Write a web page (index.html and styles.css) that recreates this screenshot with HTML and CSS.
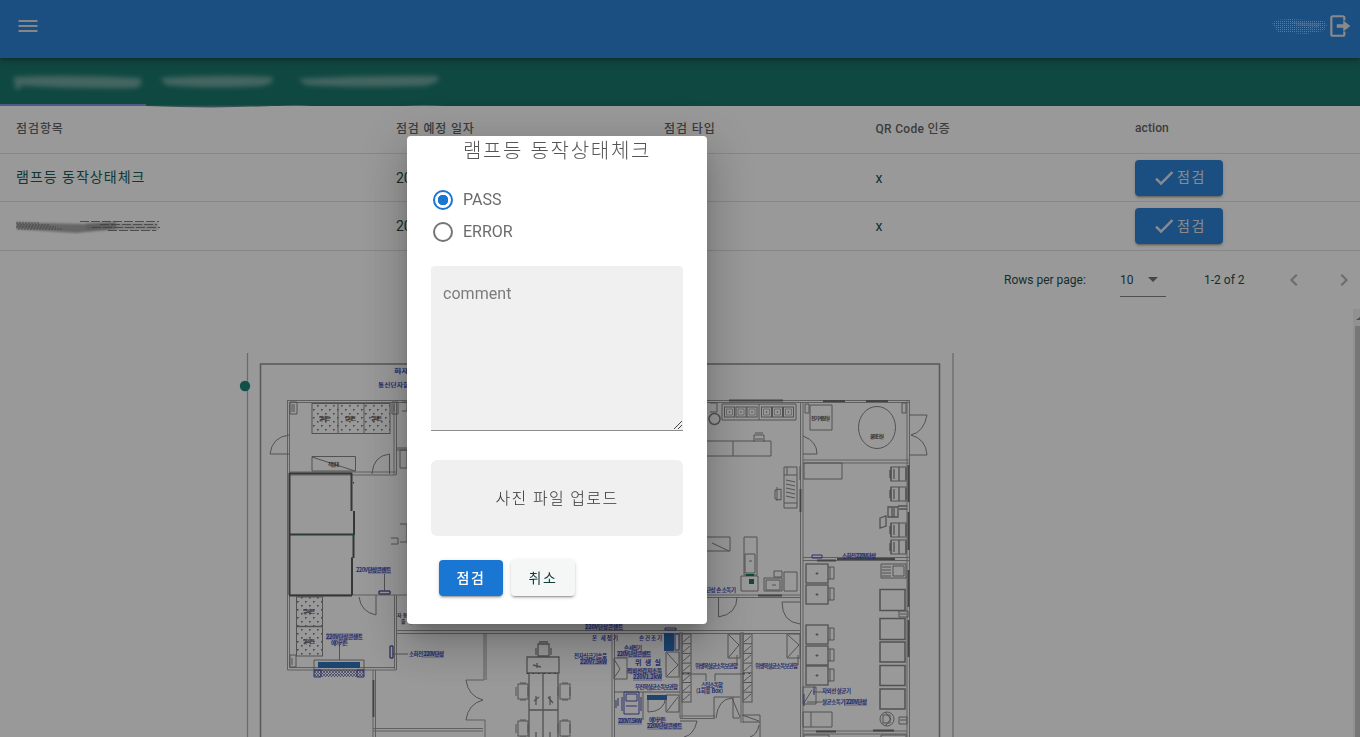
FILE: index.html
```html
<!DOCTYPE html>
<html lang="ko">
<head>
<meta charset="utf-8">
<title>점검</title>
<link rel="stylesheet" href="styles.css">
</head>
<body>
<div class="app">
  <header class="appbar">
    <svg class="menu" viewBox="0 0 24 24"><path d="M2.500 6h19v2h-19V6m0 5h19v2h-19v-2m0 5h19v2h-19v-2z"/></svg>
    <div class="user">
      <svg class="smudge-user" viewBox="0 0 56 18"><defs><pattern id="dots" width="2" height="2" patternUnits="userSpaceOnUse"><path d="M0 0h1v1H0z" fill="#b9bdcc"/></pattern></defs><path d="M0 7L4 3 18 2 52 4 55 8 52 14 33 17 6 15z" fill="url(#dots)"/><path d="M18 5L50 6 46 10 28 9z" fill="#a9b7d0" opacity=".4"/><path d="M28 14h3M36 12h4M42 10h5M33 8h3" stroke="#3f97f0"/></svg>
      <svg class="logout" viewBox="0 0 22 24"><path d="M15 7V4.500Q15 3 13.500 3H4.500Q3 3 3 4.500V19.500Q3 21 4.500 21H13.500Q15 21 15 19.500V17" fill="none" stroke="#e4e4e4" stroke-width="2"/><path d="M8 10.300h6V7l6.500 5-6.500 5v-3.300H8z" fill="#e4e4e4"/></svg>
    </div>
  </header>
  <nav class="tabs">
    <svg viewBox="0 0 480 50"><defs><filter id="soft" x="-10%" y="-60%" width="120%" height="220%"><feGaussianBlur stdDeviation="2.500"/></filter></defs>
      <g filter="url(#soft)" fill="#b5cfcc" opacity=".55"><path d="M13 19Q70 16 140 20 145 26 136 30 70 31 16 27z"/><path d="M160 20Q220 16 272 19 276 25 262 28 205 31 166 27z"/><path d="M298 21Q370 17 438 18 442 24 424 28 350 30 306 27z"/><path d="M15 19h8l-3 12h-5z"/></g>
      <path d="M0 46H146V48H0z" fill="#7f8ad4"/><path d="M146 47.500H280Q220 51 146 48z" fill="#4a7d78"/><path d="M276 48Q295 46.500 312 48zM404 48Q425 46.500 444 48z" fill="#c5dcd8" opacity=".6"/></svg>
  </nav>
  <section class="table">
    <div class="row head"><span>점검항목</span><span>점검 예정 일자</span><span>점검 타입</span><span>QR Code 인증</span><span>action</span></div>
    <div class="row"><span class="item">램프등 동작상태체크</span><span>20</span><span></span><span>x</span><span><button class="btn check"><svg viewBox="0 0 24 24"><path d="M21 7L9 19l-5.500-5.500 1.410-1.410L9 16.170 19.590 5.590z"/></svg>점검</button></span></div>
    <div class="row last"><span><svg class="scratch" viewBox="0 0 146 16"><defs><filter id="s2"><feGaussianBlur stdDeviation="1"/></filter></defs><path d="M0 4L20 5 70 6 100 4V11L60 15 30 13 0 11z" fill="#555" opacity=".55" filter="url(#s2)"/><path d="M0 5H24M1 7H34M0 9H40M2 11H46" stroke="#444" stroke-dasharray="2 1" opacity=".6"/><path d="M64 3.500H143M84 6.500H141M76 9.500H144M92 12.500H140" stroke="#444" stroke-width="1" stroke-dasharray="9 2" opacity=".75"/><path d="M70 5H142V12H70z" fill="#777" opacity=".35" filter="url(#s2)"/></svg></span><span>20</span><span></span><span>x</span><span><button class="btn check"><svg viewBox="0 0 24 24"><path d="M21 7L9 19l-5.500-5.500 1.410-1.410L9 16.170 19.590 5.590z"/></svg>점검</button></span></div>
    <footer class="pager">
      <span class="rpp">Rows per page:</span>
      <span class="select">10<i></i></span>
      <span class="range">1-2 of 2</span>
      <svg class="prev" viewBox="0 0 24 24"><path d="M15.400 16.600L10.800 12l4.600-4.600L14 6l-6 6 6 6z"/></svg>
      <svg class="next" viewBox="0 0 24 24"><path d="M8.600 16.600L13.200 12 8.600 7.400 10 6l6 6-6 6z"/></svg>
    </footer>
  </section>
  <section class="plan">
    <svg class="drawing" viewBox="0 309 1353 428">
      <defs>
        <pattern id="tile" width="8" height="8" patternUnits="userSpaceOnUse"><path d="M1 1h1.600v1.600H1zM5 5h1.600v1.600H5z" fill="#666"/></pattern>
        <pattern id="mesh" width="3" height="3" patternUnits="userSpaceOnUse"><path d="M0 0L3 3M3 0L0 3" stroke="#5058a0" stroke-width=".7"/></pattern>
        <g id="chairV"><rect x="2" y="0" width="10" height="15"/><path d="M0 3V12M4 -1H10M4 16H10M12 3V12"/></g>
        <g id="seat"><rect width="10" height="10"/><path d="M2 2H8V8H2zM5 4V6M4 5H6" opacity=".6"/></g>
        <g id="desk"><rect width="22" height="19" stroke-width="1.300"/><path d="M22 3H28V15H22M24 3V15M11 8V11M9.500 9.500H12.500"/></g>
        <g id="locker"><rect width="9" height="68"/><path d="M0 9.700H9M0 19.400H9M0 29.100H9M0 38.800H9M0 48.500H9M0 58.200H9M1 8L8 2M1 18L8 12M1 27L8 21M1 37L8 31M1 47L8 41M1 57L8 51M1 66L8 60"/></g>
        <g id="stool"><rect width="15" height="14"/><path d="M0 0V14M3 2V12M8 0V14M-1 3V11M15 1V13" stroke-width="1.300"/></g>
      </defs>
      <g class="thin">
        <path d="M247.500 353V737M953 353V737" class="pale"/>
        <path d="M260.500 737V364H939.500V737" class="frame"/>
      </g>
      <g class="wall">
        <path d="M287 400.500H909M289 402.500H909M287.500 400V670H396M289.500 402V667.500H394M394 402V475M396.500 402V475M289 472H396M289 475H396M289 595H407M394.500 595V669M396.500 595V670"/>
        <path d="M396 630.500H801M396 633.500H801M800.500 402V737M803 402V737M907 400V737M909.500 400V737M803 460H909M803 463H909M803 557.500H909M803 560.500H909M700 595H800M700 597.500H800"/>
        <path d="M373 670V737M375.500 670V737M373 728.500H483M373 731H483M484 633V680H466M486 633V680M466 720H485V737M612 633V737M614.500 633V737M680 632V718M682 632V718M741 632V723M743 632V723M680 718.500H715M680 716H715M803 731H907M803 734H907"/>
      </g>
      <g class="fine">
        <rect x="312" y="403.500" width="78" height="30" fill="url(#tile)"/><path d="M338 403V433M364 403V433"/>
        <rect x="296.500" y="597" width="26" height="59" fill="url(#tile)"/><path d="M296 626.500H322" stroke-width="1.500"/>
        <path d="M290 402h7v12h-7zM292 404v8M294 404v8M392 402h6v12h-6zM394 404v8M290 655h6v12h-6zM292 658v7M402 402h5v9h-5M396 448H407M396 450H407M400 450h7v18h-7zM400 524h7v18h-7M391 538h7v6h-7"/>
        <path d="M289 454H270Q272 437 289 435M312 456.500H355.500V471H312zM312 457L355 471M389.500 474V454Q373 456 372 474M376 595V615Q361 612 359 597M379 591h11v3h-11zM384.500 574V591M390 646h3v12h-3zM393 654H408M339.500 645V660"/>
        <path d="M314 660H364V670H314z"/>
        <path d="M466 680Q468 696 483 700 468 704 466 720"/>
        <path d="M538 644h11v12h-11zM536 648v7M551 648v7M539 642h9M527 657h32v16h-32zM529 673V737M543 673V737M558 673V737M529 710H558M533 665L541 667M537 663V668M536 696v9M550 696v9M534 701l5-4M548 697l5 6M536 732v5M550 732v5" stroke-width="1.300"/>
        <use href="#chairV" x="516" y="684"/><use href="#chairV" x="558" y="684"/><use href="#chairV" x="516" y="721"/><use href="#chairV" x="558" y="721"/>
        <path d="M666 652h13v25h-13zM667 653L678 665 667 676M614 658h13v21h-13zM614 659L620 669 614 678M666 695h13v17h-13zM667 711L678 697M614 692H680M648 700V712Q664 712 666 697M643 692V720M728 634h12v24h-12zM729 635L739 645 729 657M787 634h13v24h-13zM788 635L799 645 788 657M798 655V665M737 655V665M682 674H706V681M715 681V674H745M714 718V697H740M733 697V718H740M716 718Q718 699 732 698L740 717M743 715H760V737M743 722H760M742 715L759 721M680 721H697Q694 735 684 737M759 725Q757 735 750 737"/>
        <use href="#locker" x="682" y="634"/><use href="#locker" x="743" y="634"/>
        <path d="M722 404h74v16h-74zM759 404v16M710 403h7v9h-7M707 441h64v15h-64M733 441v15M754 442V435h10v7M755 439h8M755 433h8"/>
        <circle cx="714.500" cy="419" r="5.500" stroke-width="1.500"/>
        <use href="#seat" x="724.500" y="407"/><use href="#seat" x="736" y="407"/><use href="#seat" x="747" y="407"/><use href="#seat" x="761.500" y="407"/><use href="#seat" x="772.500" y="407"/><use href="#seat" x="783.500" y="407"/>
        <path d="M803 436Q817 441 817 454H803M810 405h22v25h-22zM805 404h4v9h-4zM902 403h4v10h-4zM909 415H927Q924 432 911 435 926 439 927 455H909M804 463h38v16h-38zM784 467h13v41h-13zM784 475h13M784 503h13M787 467v8M786 480l9 2M786 484l9 2M786 488l9 2M786 492l9 2M786 496l9 2M775 490l6-1v11l-6-1zM777 487v14"/>
        <ellipse cx="877" cy="427.500" rx="18.500" ry="21"/>
        <use href="#stool" x="891" y="467"/><use href="#stool" x="891" y="487"/><use href="#stool" x="891" y="523"/><use href="#stool" x="891" y="540"/>
        <path d="M888 507h10v10h-10zM892 508v9M894 508v9M880 518l6-2v10l-6 2zM898 506h9M899 509h8" stroke-width="1.300"/>
        <path d="M700 537h30v14h-30M712 543L729 551M744 537h13v38h-13zM745 554h10v19h-10zM749 561h3M741 576h17v15h-17zM764 578h18v13h-18zM766 580h14v10h-14zM772 585h4M784 572h13v19h-13zM774 571h8v6h-8zM718.500 597V617Q737 614 737 597M800 602H782Q782 622 800 624M800 466V480"/>
        <use href="#desk" x="806" y="564"/><use href="#desk" x="806" y="585"/><use href="#desk" x="806" y="625"/><use href="#desk" x="806" y="646"/><use href="#desk" x="806" y="666"/>
        <path d="M880 589.500h25v21h-25zM880 618.500h25v21h-25zM880 642h25v20h-25zM880 665.500h25v20h-25zM880 689h25v20h-25z" stroke-width="1.500"/>
        <path d="M881 564h25v14h-25zM893 566h11v10h-11zM882 567h9M882 570h9M882 573h9M882 576h9M899 611h9v6h-9zM900 614h6M899 717h8v7h-8zM900 720h6M803 712h29v15h-29zM811 712v15M803 687h13v17h-13zM804 703L812 690M813 692H822M807 702H822M804 737V735H829V737M881 737V735H906V737"/>
        <circle cx="887" cy="719" r="7"/><path d="M883 715h7v8h-7zM885 712L891 719 885 726"/>
      </g>
      <g class="heavy"><path d="M289 473.500H352M289.500 473V595M289 534.500H354M289 595.500H352M351.500 473V511M354 511V535M353.500 535V558M352 558V595"/></g>
      <g class="heavy window"><path d="M373.500 680V717M800.500 489V512M908.500 465V502M908.500 512V550M908.500 570V607M908.500 620V657M729 400.500H783M823 401H845M866 401H888M758 595.500H782M817 560.500H836M837 559H895M816 731.500H836M873 730.500H894"/></g>
      <path d="M291 473.500H350M291 534.500H353M353.500 482V486M352 557V560M352 584V587M527 673.500H559M682 673.500H691M743 673.500H752" stroke="#006b5b" stroke-width="1.200" stroke-dasharray="1.500 4" fill="none"/>
      <path d="M749 579h5v5h-5zM746 574h8v2h-8z" fill="#006b5b"/>
      <path d="M318 662H360V668H318zM664 633H674V651H664zM647 695H667V700H647z" fill="#1964b4"/>
      <path d="M314 670H364V677H314z" fill="url(#mesh)"/>
      <g fill="none" stroke="#3940a8" stroke-width="1"><path d="M314 670h7v7h-7zM357 670h7v7h-7zM379 591h11v3h-11zM390 646h3v12h-3zM812 555h10v3h-10zM624 692h15v22h-15zM626 694h11v7h-11zM622 697v14M641 697v14M626 706h11M616 700v8M618 698v8M675 634h4v16h-4zM665 628h11v2h-11zM804 694v12M814 687v8"/></g>
      <path class="wash" d="M368 567h23v7h-23zM326 633h36v7h-36zM422 651h22v7h-22zM580 658h27v7h-27zM585 624h38v7h-38zM617 651h34v7h-34zM633 674h29v7h-29zM627 668h35v6h-35zM618 718h24v7h-24zM647 723h35v7h-35zM855 553h21v7h-21zM844 699h23v7h-23z"/>
      <g class="note">
        <text x="394" y="373" textLength="38" lengthAdjust="spacingAndGlyphs">화재감지기</text><text x="378" y="387" textLength="42" lengthAdjust="spacingAndGlyphs">통신단자함용 -</text>
        <text x="356" y="572" textLength="35">220V단상콘센트</text><text x="326" y="639" textLength="37">220V단상콘센트</text><text x="331" y="645" textLength="17">에어커튼</text>
        <text x="409" y="656" textLength="35">소화전 220V단상</text><text x="574" y="658" textLength="33">전자식급기송풍</text><text x="580" y="664" textLength="27">220V7.5kW</text><text x="585" y="629" textLength="38">220V단상콘센트</text><text x="592" y="640" textLength="26">온 세정기</text><text x="639" y="640" textLength="23">손건조기</text>
        <text x="624" y="650" textLength="18">손 세정기</text><text x="617" y="656" textLength="34">220V단상콘센트</text><text x="635" y="665" textLength="26" class="big">위 생 실</text><text x="627" y="673" textLength="35">적외선감지소독</text><text x="633" y="679" textLength="29">220V1.2kW</text><text x="635" y="689" textLength="43">무진복살균소독보관함</text><text x="618" y="723" textLength="24">220V7.5kW</text><text x="649" y="722" textLength="17">에어커튼</text><text x="647" y="728" textLength="35">220V단상콘센트</text>
        <text x="695" y="668" textLength="43">위생복살균소독보관함</text><text x="755" y="668" textLength="43">위생복살균소독보관함</text><text x="701" y="687" textLength="22">스팀소독함</text><text x="696" y="693" textLength="27">(1회용 Box)</text><text x="706" y="592" textLength="30">단상 손 소독기</text><text x="842" y="558" textLength="34">소화전 220V단상</text><text x="822" y="693" textLength="29">자외선 살균기</text><text x="822" y="704" textLength="45">살균소독기 220V단상</text>
      </g>
      <g class="note black"><text x="319" y="420" textLength="11">팔레트</text><text x="345" y="420" textLength="11">팔레트</text><text x="371" y="420" textLength="11">팔레트</text><text x="303" y="613" textLength="12">팔레트</text><text x="303" y="643" textLength="12">팔레트</text><text x="328" y="466" textLength="11">작업대</text><text x="811" y="420" textLength="19">전기계량실</text><text x="870" y="438" textLength="14">물탱크실</text><text x="397" y="617" textLength="16">자동문</text><text x="401" y="623" textLength="12">출입</text></g>
      <circle cx="245" cy="386" r="5.200" fill="#00796b"/>
    </svg>
    <div class="scroll"><b></b><i></i></div>
  </section>
</div>
<div class="scrim">
  <form class="dialog">
    <h2>램프등 동작상태체크</h2>
    <label class="radio on"><i></i><span>PASS</span></label>
    <label class="radio"><i></i><span>ERROR</span></label>
    <div class="comment">comment<svg viewBox="0 0 10 10"><path d="M1 9L9 1M5 9L9 5" stroke="#444" stroke-width="1"/></svg></div>
    <div class="upload">사진 파일 업로드</div>
    <div class="actions"><button type="button" class="btn primary">점검</button><button type="button" class="btn cancel">취소</button></div>
  </form>
</div>
</body>
</html>
```
FILE: styles.css
```css
* { box-sizing: border-box; }
body { margin: 0; font-family: Roboto, "Noto Sans CJK KR", sans-serif; overflow: hidden; }
svg { display: block; }
.app { width: 1360px; height: 737px; background: #fff; overflow: hidden; }
.appbar { position: relative; height: 58px; padding: 0 8px 6px 16px; background: #1976d2; display: flex; align-items: center; justify-content: space-between; box-shadow: 0 2px 4px rgba(0,0,0,.35), 0 4px 8px rgba(0,0,0,.15); }
.menu { width: 24px; height: 24px; fill: #dcdcdc; }
.user { display: flex; align-items: center; }
.smudge-user { width: 56px; height: 18px; }
.logout { width: 24px; height: 26px; }
.tabs { height: 48px; background: #00695c; }
.tabs svg { width: 480px; height: 50px; position: relative; }
.table { height: 203px; color: #063a37; }
.row { display: grid; grid-template-columns: 380px 268px 211.500px 259.500px 241px; height: 48px; align-items: center; border-bottom: 1px solid #dedede; font-size: 14px; }
.row > span { padding-left: 16px; }
.row.last { height: 49px; }
.head { font-size: 12px; font-weight: 500; color: #555; padding-bottom: 3px; }
.head > span { letter-spacing: .1px; }
.head > span:not(:last-child) { letter-spacing: .3px; margin-top: -1px; }
.head > span:nth-child(2) { letter-spacing: .8px; }
.head > span:nth-child(1), .head > span:nth-child(3) { letter-spacing: .9px; }
.item { letter-spacing: 1px; font-weight: 400; padding-bottom: 4px; color: #004d47; }
.scratch { width: 146px; height: 16px; }
.btn { border: 0; border-radius: 4px; height: 36px; display: flex; align-items: center; justify-content: center; font: 500 14px Roboto, "Noto Sans CJK KR", sans-serif; letter-spacing: 1.700px; color: #fff; padding: 0 0 3px; box-shadow: 0 3px 1px -2px rgba(0,0,0,.2), 0 2px 2px rgba(0,0,0,.14), 0 1px 5px rgba(0,0,0,.12); }
.check { width: 88px; background: #1976d2; color: #e0e4ea; font-weight: 400; }
.check svg { width: 24px; height: 24px; fill: #e0e4ea; stroke: #e0e4ea; stroke-width: .6; margin: 3px 1px 0 0; }
.pager { height: 58px; display: flex; align-items: center; font-size: 12px; padding-left: 1004px; }
.rpp { width: 116px; }
.select { width: 46px; height: 34px; display: flex; align-items: center; justify-content: space-between; border-bottom: 1px solid #777; padding-right: 8px; }
.select i { border: 5px solid transparent; border-top-color: #666; border-bottom: 0; }
.range { width: 78px; margin-left: 38px; }
.prev, .next { width: 24px; height: 24px; fill: #aaa; }
.next { margin-left: 26px; }
.plan { height: 428px; display: flex; }
.drawing { width: 1353px; height: 428px; font-family: "Noto Sans CJK KR", sans-serif; }
.thin, .wall, .fine, .heavy { fill: none; }
.pale { stroke: #aaa; stroke-width: 1.300; }
.frame { stroke: #858585; stroke-width: 1.500; }
.wall { stroke: #949494; stroke-width: 1; }
.fine { stroke: #7c7c7c; stroke-width: 1; }
.heavy { stroke: #484848; stroke-width: 2; }
.window { stroke: #626262; stroke-width: 1.800; }
.wash { fill: #3a45b0; opacity: .28; }
.note { fill: #2a37ad; font-size: 5.500px; font-weight: 700; }
.note .big { font-size: 7px; }
.note.black { fill: #444; font-size: 5px; }
.scroll { width: 7px; background: #f1f1f1; padding: 8px 0 0 2px; }
.scroll b { display: block; width: 0; height: 0; margin-left: 1px; border: 4px solid transparent; border-bottom: 3px solid #777; border-top: 0; }
.scroll i { display: block; height: 420px; margin-top: 6px; background: #c1c1c1; }
.scrim { position: fixed; inset: 0; background: rgba(33,33,33,.46); padding: 136px 0 0 407px; }
.dialog { width: 300px; height: 488px; padding: 0 24px; background: #fff; border-radius: 4px; color: #6b6b6b; box-shadow: 0 11px 15px -7px rgba(0,0,0,.2), 0 24px 38px 3px rgba(0,0,0,.14), 0 9px 46px 8px rgba(0,0,0,.12); }
.dialog h2 { margin: 0; height: 48px; font: 300 20px/28px "Noto Sans CJK KR", sans-serif; letter-spacing: 1.700px; text-align: center; white-space: nowrap; color: #555; }
.radio { display: flex; align-items: center; height: 32px; gap: 10px; padding-left: 2px; font-size: 16px; }
.radio i { width: 20px; height: 20px; border: 2px solid #757575; border-radius: 50%; }
.radio span { padding-bottom: 2px; }
.radio.on i { border-color: #1976d2; background: radial-gradient(circle, #1976d2 5px, #fff 5.500px); }
.comment { height: 165px; margin-top: 18px; padding: 18px 12px; background: #f0f0f0; border-bottom: 1px solid #8c8c8c; border-radius: 4px 4px 0 0; font-size: 16px; line-height: 20px; letter-spacing: .05px; color: #7c7c7c; display: flex; justify-content: space-between; }
.comment svg { width: 10px; height: 10px; align-self: flex-end; margin: 0 -12px -18px 0; }
.upload { height: 76px; margin-top: 29px; padding-bottom: 3px; background: #f0f0f0; border-radius: 6px; display: flex; align-items: center; justify-content: center; font-size: 16px; font-weight: 300; letter-spacing: 1.350px; color: #333; }
.actions { display: flex; gap: 8px; margin-top: 24px; padding-left: 8px; }
.primary { width: 64px; background: #1976d2; }
.cancel { width: 64px; background: #f5f7f7; color: #123c38; font-weight: 400; }
```
